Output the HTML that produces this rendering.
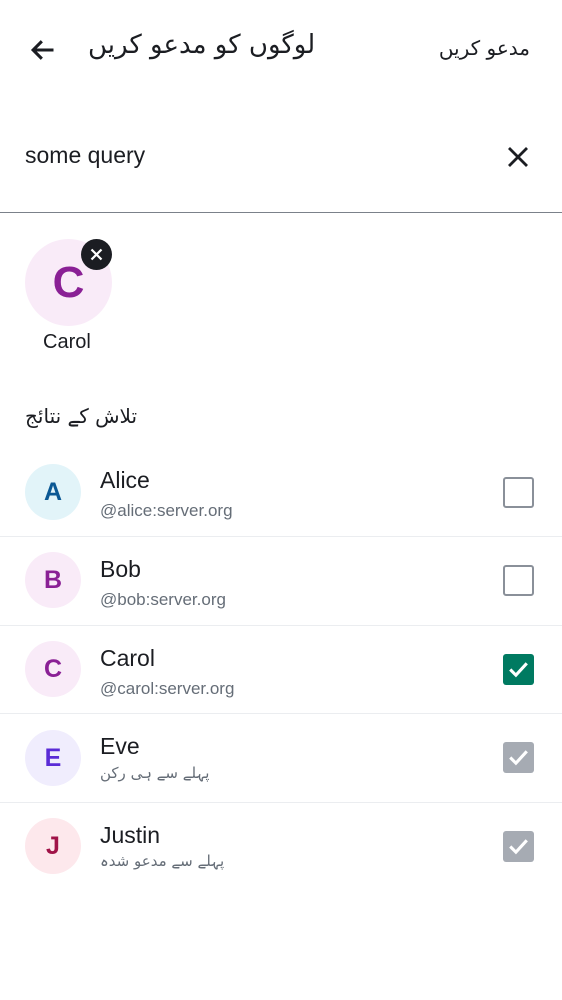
<!DOCTYPE html>
<html><head><meta charset="utf-8"><style>
*{margin:0;padding:0;box-sizing:border-box}
body{width:562px;height:1000px;background:#fff;position:relative;overflow:hidden;font-family:"Liberation Sans","Noto Sans CJK SC",sans-serif;color:#1b1d22}
.a{position:absolute;white-space:nowrap}
.ur{font-family:"DejaVu Sans","Noto Sans CJK SC",sans-serif}
.av{position:absolute;left:25px;width:56px;height:56px;border-radius:50%;text-align:center;line-height:56px;font-weight:bold;font-size:25px}
.nm{position:absolute;left:100px;font-size:23px}
.sb{position:absolute;left:100px;font-size:17px;color:#656d77}
.cb{position:absolute;left:503px;width:31px;height:31px;border-radius:3px}
.div{position:absolute;left:0;width:562px;height:1px;background:#ebedf0}
</style></head><body>
<svg class="a" style="left:29px;top:36px" width="28" height="28" viewBox="0 0 24 24"><path d="M21 12H4M11 4.5l-7.5 7.5 7.5 7.5" fill="none" stroke="#1b1d22" stroke-width="2.6"/></svg>
<div class="a ur" style="left:88px;top:30px;font-size:26px">لوگوں کو مدعو کریں</div>
<div class="a ur" style="right:32px;top:36px;font-size:20px">مدعو کریں</div>
<div class="a" style="left:25px;top:142px;font-size:23px">some query</div>
<svg class="a" style="left:506px;top:145px" width="24" height="24" viewBox="0 0 24 24"><path d="M3 3L21 21M21 3L3 21" stroke="#1b1d22" stroke-width="2.8"/></svg>
<div class="a" style="left:0;top:212px;width:562px;height:1px;background:#7b818a"></div>
<div class="a" style="left:25px;top:239px;width:87px;height:87px;border-radius:50%;background:#f9ebf8;color:#8a2095;font-weight:bold;font-size:44px;text-align:center;line-height:87px">C</div>
<div class="a" style="left:81px;top:239px;width:31px;height:31px;border-radius:50%;background:#1b1d22"></div>
<svg class="a" style="left:90px;top:248px" width="13" height="13" viewBox="0 0 13 13"><path d="M1.5 1.5L11.5 11.5M11.5 1.5L1.5 11.5" stroke="#fff" stroke-width="2.2"/></svg>
<div class="a" style="left:43px;top:331px;font-size:20px">Carol</div>
<div class="a ur" style="left:25px;top:404px;font-size:20px">تلاش کے نتائج</div>

<div class="av" style="top:464px;background:#e2f4f9;color:#0b5894">A</div>
<div class="nm" style="top:467px">Alice</div>
<div class="sb" style="top:501px">@alice:server.org</div>
<div class="cb" style="top:477px;border:2.5px solid #8a9099"></div>
<div class="div" style="top:536px"></div>

<div class="av" style="top:552px;background:#f9ebf8;color:#8a2095">B</div>
<div class="nm" style="top:556px">Bob</div>
<div class="sb" style="top:590px">@bob:server.org</div>
<div class="cb" style="top:565px;border:2.5px solid #8a9099"></div>
<div class="div" style="top:625px"></div>

<div class="av" style="top:641px;background:#f9ebf8;color:#8a2095">C</div>
<div class="nm" style="top:645px">Carol</div>
<div class="sb" style="top:679px">@carol:server.org</div>
<div class="cb" style="top:654px;background:#007a61"></div>
<svg class="a" style="left:503px;top:654px" width="31" height="31" viewBox="0 0 30 30"><path d="M7 15l5.5 5.5L23 9" fill="none" stroke="#fff" stroke-width="3"/></svg>
<div class="div" style="top:713px"></div>

<div class="av" style="top:730px;background:#f0edfd;color:#5a2bd6">E</div>
<div class="nm" style="top:733px">Eve</div>
<div class="sb ur" style="top:764px;font-size:15px">پہلے سے ہی رکن</div>
<div class="cb" style="top:742px;background:#a6abb3"></div>
<svg class="a" style="left:503px;top:742px" width="31" height="31" viewBox="0 0 30 30"><path d="M7 15l5.5 5.5L23 9" fill="none" stroke="#fff" stroke-width="3"/></svg>
<div class="div" style="top:802px"></div>

<div class="av" style="top:818px;background:#fde8ec;color:#a01348">J</div>
<div class="nm" style="top:822px">Justin</div>
<div class="sb ur" style="top:852px;font-size:15px">پہلے سے مدعو شدہ</div>
<div class="cb" style="top:831px;background:#a6abb3"></div>
<svg class="a" style="left:503px;top:831px" width="31" height="31" viewBox="0 0 30 30"><path d="M7 15l5.5 5.5L23 9" fill="none" stroke="#fff" stroke-width="3"/></svg>
</body></html>
